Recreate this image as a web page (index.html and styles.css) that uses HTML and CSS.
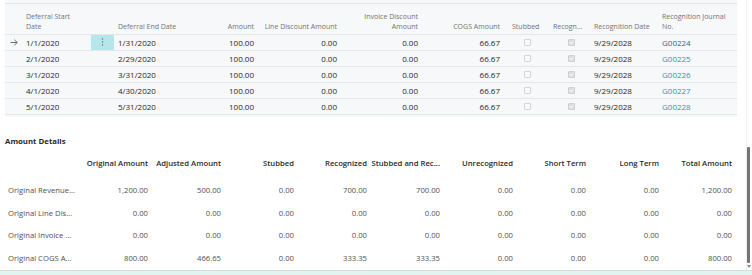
FILE: index.html
```html
<!DOCTYPE html>
<html lang="en">
<head>
  <meta charset="UTF-8">
  <title>Deferral Schedule</title>
  <link rel="stylesheet" href="styles.css">
</head>
<body>
  <div class="lines">
    <div class="row head">
      <div></div>
      <div class="l">Deferral Start<br>Date</div>
      <div></div>
      <div class="l">Deferral End Date</div>
      <div class="r">Amount</div>
      <div class="r">Line Discount Amount</div>
      <div class="r">Invoice Discount<br>Amount</div>
      <div class="r">COGS Amount</div>
      <div class="h-stub">Stubbed</div>
      <div class="h-rec">Recogn...</div>
      <div class="l">Recognition Date</div>
      <div class="l">Recognition Journal<br>No.</div>
    </div>

    <div class="row current">
      <div class="arrow">
        <svg width="8" height="7" viewBox="0 0 8 7"><path d="M0.5 3.5H7.2M4.4 0.8L7.2 3.5L4.4 6.2" fill="none" stroke="#5a5a5a" stroke-width="0.9"/></svg>
      </div>
      <div class="l">1/1/2020</div>
      <div class="dots">
        <svg width="3" height="9" viewBox="0 0 3 9"><circle cx="1.5" cy="1" r="0.7" fill="#6a6a6a"/><circle cx="1.5" cy="4" r="0.7" fill="#6a6a6a"/><circle cx="1.5" cy="7" r="0.7" fill="#6a6a6a"/></svg>
      </div>
      <div class="l">1/31/2020</div>
      <div class="r">100.00</div>
      <div class="r">0.00</div>
      <div class="r">0.00</div>
      <div class="r">66.67</div>
      <div class="c-stub"><span class="box"></span></div>
      <div class="c-rec"><span class="box checked"></span></div>
      <div class="l">9/29/2028</div>
      <div class="l link first">G00224</div>
    </div>

    <div class="row">
      <div></div>
      <div class="l">2/1/2020</div>
      <div></div>
      <div class="l">2/29/2020</div>
      <div class="r">100.00</div>
      <div class="r">0.00</div>
      <div class="r">0.00</div>
      <div class="r">66.67</div>
      <div class="c-stub"><span class="box"></span></div>
      <div class="c-rec"><span class="box checked"></span></div>
      <div class="l">9/29/2028</div>
      <div class="l link">G00225</div>
    </div>

    <div class="row">
      <div></div>
      <div class="l">3/1/2020</div>
      <div></div>
      <div class="l">3/31/2020</div>
      <div class="r">100.00</div>
      <div class="r">0.00</div>
      <div class="r">0.00</div>
      <div class="r">66.67</div>
      <div class="c-stub"><span class="box"></span></div>
      <div class="c-rec"><span class="box checked"></span></div>
      <div class="l">9/29/2028</div>
      <div class="l link">G00226</div>
    </div>

    <div class="row">
      <div></div>
      <div class="l">4/1/2020</div>
      <div></div>
      <div class="l">4/30/2020</div>
      <div class="r">100.00</div>
      <div class="r">0.00</div>
      <div class="r">0.00</div>
      <div class="r">66.67</div>
      <div class="c-stub"><span class="box"></span></div>
      <div class="c-rec"><span class="box checked"></span></div>
      <div class="l">9/29/2028</div>
      <div class="l link">G00227</div>
    </div>

    <div class="row">
      <div></div>
      <div class="l">5/1/2020</div>
      <div></div>
      <div class="l">5/31/2020</div>
      <div class="r">100.00</div>
      <div class="r">0.00</div>
      <div class="r">0.00</div>
      <div class="r">66.67</div>
      <div class="c-stub"><span class="box"></span></div>
      <div class="c-rec"><span class="box checked"></span></div>
      <div class="l">9/29/2028</div>
      <div class="l link">G00228</div>
    </div>
  </div>

  <div class="details">
    <div class="title">Amount Details</div>
    <div class="amounts">
      <div class="arow ahead">
        <div></div>
        <div>Original Amount</div>
        <div>Adjusted Amount</div>
        <div>Stubbed</div>
        <div>Recognized</div>
        <div>Stubbed and Rec...</div>
        <div>Unrecognized</div>
        <div>Short Term</div>
        <div>Long Term</div>
        <div>Total Amount</div>
      </div>
      <div class="arow">
        <div class="label">Original Revenue...</div>
        <div>1,200.00</div>
        <div>500.00</div>
        <div>0.00</div>
        <div>700.00</div>
        <div>700.00</div>
        <div>0.00</div>
        <div>0.00</div>
        <div>0.00</div>
        <div>1,200.00</div>
      </div>
      <div class="arow">
        <div class="label">Original Line Dis...</div>
        <div>0.00</div>
        <div>0.00</div>
        <div>0.00</div>
        <div>0.00</div>
        <div>0.00</div>
        <div>0.00</div>
        <div>0.00</div>
        <div>0.00</div>
        <div>0.00</div>
      </div>
      <div class="arow">
        <div class="label">Original Invoice ...</div>
        <div>0.00</div>
        <div>0.00</div>
        <div>0.00</div>
        <div>0.00</div>
        <div>0.00</div>
        <div>0.00</div>
        <div>0.00</div>
        <div>0.00</div>
        <div>0.00</div>
      </div>
      <div class="arow">
        <div class="label">Original COGS A...</div>
        <div>800.00</div>
        <div>466.65</div>
        <div>0.00</div>
        <div>333.35</div>
        <div>333.35</div>
        <div>0.00</div>
        <div>0.00</div>
        <div>0.00</div>
        <div>800.00</div>
      </div>
    </div>
  </div>

  <div class="footer"></div>

  <div class="scroll-track"></div>
  <div class="scroll-thumb"></div>
  <div class="scroll-arrow"></div>
</body>
</html>
```

FILE: styles.css
```css
body {
  margin: 0;
  height: 275px;
  overflow: hidden;
  font-family: "Open Sans", "Segoe UI", sans-serif;
  background-color: #fff;
  color: #1f1f1f;
  display: flex;
  flex-direction: column;
  position: relative;
}

/* deferral lines */
.lines {
  margin: 0 15px 0 5px;
  padding: 3px 0 2px;
  background-color: #f7f8f9;
}

.row {
  display: grid;
  grid-template-columns: 17px 69px 23px 86px 58px 83px 81px 82px 48px 38px 68px 79px;
  height: 15px;
  align-items: center;
  border-bottom: 1px solid #e5e6e7;
  font-size: 8px;
  line-height: 10px;
  white-space: nowrap;
}

.row > div {
  height: 100%;
  display: flex;
  align-items: center;
}

.row.head {
  height: 30px;
  border-top: 1px solid #e4e5e6;
  font-size: 7px;
  color: #737373;
}

.row.head > div {
  display: block;
  height: auto;
  align-self: end;
  padding-bottom: 2px;
}

.l {
  padding-left: 4px;
}

.r {
  justify-content: flex-end;
  text-align: right;
  padding-right: 4px;
}

.h-stub {
  padding-left: 8px;
}

.h-rec {
  padding-left: 1px;
}

.arrow {
  justify-content: flex-end;
  padding-right: 4px;
}

.row > .dots {
  justify-content: center;
  background-color: #b4e6ea;
}

.c-stub,
.c-rec {
  justify-content: center;
}

.c-stub {
  padding-right: 1px;
}

.box {
  width: 5px;
  height: 5px;
  border: 1px solid #d6d6d6;
  background-color: #fbfbfb;
  border-radius: 1px;
  position: relative;
}

.box.checked {
  background-color: #dedede;
  border-color: #cfcfcf;
}

.box.checked::after {
  content: "";
  position: absolute;
  left: 1px;
  top: 0;
  width: 2px;
  height: 3px;
  border: solid #f4f4f4;
  border-width: 0 1px 1px 0;
  transform: rotate(40deg);
}

.link {
  color: #2e9b98;
}

.link.first {
  color: #17708a;
}

/* amount details */
.details {
  padding: 18px 0 0 5px;
}

.title {
  font-size: 7.8px;
  font-weight: 700;
  line-height: 12px;
  color: #2a2a2a;
  margin-bottom: 5px;
}

.arow {
  display: grid;
  grid-template-columns: 70px repeat(9, 73px);
  height: 22.5px;
  align-items: center;
  font-size: 7.7px;
  color: #505050;
  text-align: right;
  white-space: nowrap;
}

.arow.ahead {
  height: 22px;
  margin-bottom: 5px;
  font-weight: 600;
  color: #2a2a2a;
}

.arow .label {
  text-align: left;
  padding-left: 3px;
}

.footer {
  margin-top: auto;
  height: 4px;
  border-top: 1px solid #d8dcdb;
  background-color: #e2f4ef;
}

/* overlay scrollbar */
.scroll-track {
  position: absolute;
  left: 746px;
  top: 0;
  bottom: 5px;
  width: 1px;
  background-color: #efefef;
}

.scroll-thumb {
  position: absolute;
  left: 747px;
  top: 147px;
  width: 3px;
  height: 116px;
  border-radius: 1px;
  background-color: #747474;
}

.scroll-arrow {
  position: absolute;
  left: 747px;
  top: 265px;
  width: 0;
  height: 0;
  border-left: 2px solid transparent;
  border-right: 2px solid transparent;
  border-top: 3px solid #8a8a8a;
}
```
